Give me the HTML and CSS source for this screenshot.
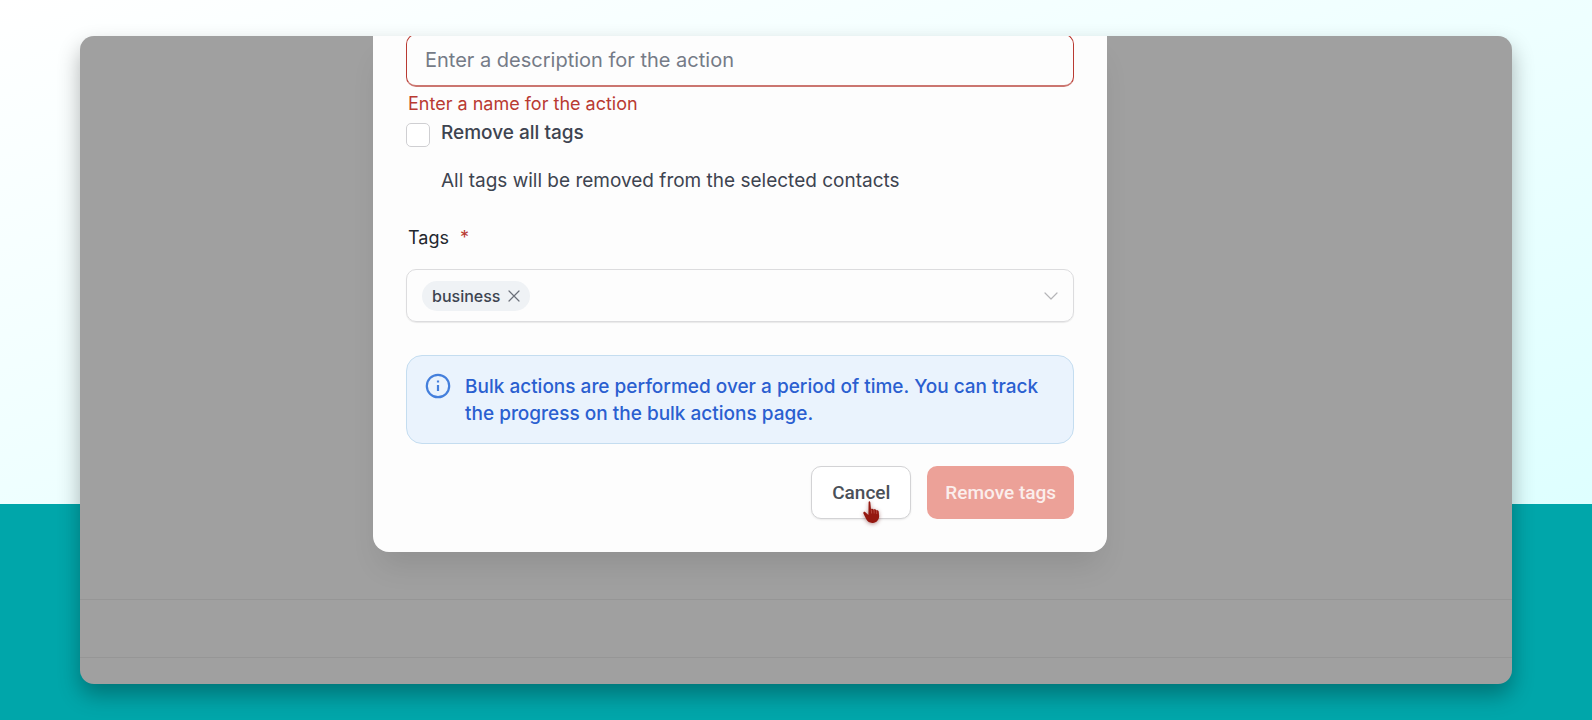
FILE: index.html
```html
<!DOCTYPE html>
<html lang="en">
<head>
    <meta charset="UTF-8">
    <meta name="viewport" content="width=device-width, initial-scale=1.0">
    <title>Remove tags</title>
    <link rel="stylesheet" href="styles.css">
</head>
<body>

<main class="screen">
    <!-- Remove tags dialog -->
    <form class="dialog">
        <input type="text" class="text-input" id="action-name" aria-label="Action description" aria-describedby="action-error" placeholder="Enter a description for the action">
        <p class="error" id="action-error">Enter a name for the action</p>

        <div class="check-row">
            <input type="checkbox" class="checkbox" id="remove-all">
            <div>
                <label class="check-label" for="remove-all">Remove all tags</label>
                <p class="check-help">All tags will be removed from the selected contacts</p>
            </div>
        </div>

        <label class="field-label" for="tags">Tags <span class="required">*</span></label>
        <div class="tag-select">
            <span class="chip">
                business
                <button type="button" class="chip-remove" aria-label="Remove business">
                    <svg width="12" height="12" viewBox="0 0 12 12" fill="none" stroke="currentColor" stroke-width="1.2" stroke-linecap="round"><path d="M1 1l10 10M11 1L1 11"/></svg>
                </button>
            </span>
            <select id="tags"><option value=""></option></select>
            <svg class="chevron" width="14" height="8" viewBox="0 0 14 8" fill="none" stroke="currentColor" stroke-width="1.2" stroke-linecap="round" stroke-linejoin="round"><path d="M1 1l6 6 6-6"/></svg>
        </div>

        <div class="notice">
            <svg class="notice-icon" width="26" height="26" viewBox="0 0 26 26" fill="none" stroke="currentColor" stroke-width="2.2"><circle cx="13" cy="13" r="11.2"/><path d="M13 12v6"/><path d="M13 7.500v2"/></svg>
            <p>Bulk actions are performed over a period of time. You can track the progress on the bulk actions page.</p>
        </div>

        <div class="actions">
            <button type="button" class="btn btn-cancel">
                Cancel
                <svg class="pointer" width="22" height="26" viewBox="0 0 22 26"><path d="M7.600 2.200c0-1.300 1.600-1.300 1.700 0l.7 7c.6-.7 2.200-.6 2.600.5.7-.6 2.200-.4 2.600.7 1-.5 2.300 0 2.500 1.200l.4 4.200c.2 3.600-2.300 6.900-6.300 7.100-3 .2-5.200-1.200-6.500-3.600L2.400 13.600c-.5-1.300.9-2.300 2-1.400l3 2.800z" fill="#951810"/><path d="M10.300 9.500l.3 4M13 10l.2 3.500M15.600 11l.1 3" stroke="#c9665c" stroke-width=".6"/></svg>
            </button>
            <button type="submit" class="btn btn-remove">Remove tags</button>
        </div>
    </form>

    <!-- List rows behind the dialog -->
    <div class="rows">
        <div class="row"></div>
        <div class="row row-last"></div>
    </div>
</main>

</body>
</html>
```
FILE: styles.css
```css
:root {
    --teal: #00a6aa;
    --overlay: #a0a0a0;
    --overlay-line: #969696;
    --danger: #b93a32;
    --blue: #2a5fd0;
    --text: #3d4450;
    --border: #dcdcde;
}

* {
    box-sizing: border-box;
}

body {
    margin: 0;
    min-height: 100vh;
    padding: 36px 80px;
    font-family: Inter, "Liberation Sans", sans-serif;
    font-size: 19px;
    color: var(--text);
    background: linear-gradient(to bottom right, #ffffff, #deffff) top / 100% 70% no-repeat var(--teal);
}

p {
    margin: 0;
}

.screen {
    overflow: hidden;
    border-radius: 14px;
    background-color: var(--overlay);
    box-shadow: 0 11px 22px rgba(0, 0, 0, 0.3);
}

/* Dialog */
.dialog {
    position: relative;
    z-index: 1;
    max-width: 734px;
    margin: -2px 0 0 293px;
    padding: 0 33px 33px;
    border-radius: 0 0 16px 16px;
    background-color: #fdfdfd;
    box-shadow: 0 20px 30px -8px rgba(0, 0, 0, 0.1);
}

.text-input {
    display: block;
    width: 100%;
    height: 53px;
    padding: 0 18px;
    border: 1px solid var(--danger);
    border-bottom: 2px solid #cb7670;
    border-radius: 10px;
    background: transparent;
    font: inherit;
    font-size: 20px;
    color: var(--text);
    outline: none;
}

.text-input::placeholder {
    color: #757b87;
    opacity: 1;
}

.error {
    padding: 4px 2px 0;
    font-size: 18px;
    line-height: 26px;
    color: var(--danger);
}

.check-row {
    display: flex;
    gap: 11px;
    padding-top: 3px;
}

.checkbox {
    appearance: none;
    flex: none;
    width: 24px;
    height: 24px;
    margin: 3px 0 0;
    border: 1px solid #cfcfd2;
    border-radius: 5px;
    background-color: #fff;
}

.check-label {
    display: block;
    font-weight: 500;
    line-height: 26px;
}

.check-help {
    padding-top: 22px;
    line-height: 26px;
}

.field-label {
    display: block;
    padding: 31px 2px 18px;
    font-size: 18px;
    line-height: 26px;
    color: #23272e;
}

.required {
    margin-left: 6px;
    color: var(--danger);
}

.tag-select {
    display: flex;
    align-items: center;
    height: 53px;
    padding: 0 15px;
    border: 1px solid var(--border);
    border-radius: 10px;
    box-shadow: 0 1px 1px rgba(0, 0, 0, 0.08);
}

.chip {
    display: flex;
    align-items: center;
    gap: 8px;
    height: 30px;
    padding: 0 10px;
    border-radius: 15px;
    background-color: #eff2f5;
    font-size: 16px;
    font-weight: 500;
}

.chip-remove {
    display: flex;
    padding: 0;
    border: none;
    background: none;
    color: #6b7079;
    cursor: pointer;
}

.tag-select select {
    appearance: none;
    flex: 1;
    height: 100%;
    border: none;
    background: transparent;
    outline: none;
}

.chevron {
    color: #b5b5b8;
    pointer-events: none;
}

.notice {
    display: flex;
    gap: 14px;
    margin-top: 33px;
    padding: 17px 18px 16px;
    border: 1px solid #c4ddf0;
    border-radius: 16px;
    background-color: #eaf3fd;
    font-weight: 500;
    line-height: 27px;
    color: var(--blue);
}

.notice-icon {
    flex: none;
    color: #447fdc;
}

.actions {
    display: flex;
    justify-content: flex-end;
    gap: 16px;
    margin-top: 22px;
}

.btn {
    height: 53px;
    padding: 0 20px;
    border: 1px solid transparent;
    border-radius: 10px;
    font-family: Roboto, Inter, sans-serif;
    font-size: 19px;
    font-weight: 500;
    cursor: pointer;
}

.btn-cancel {
    position: relative;
    border-color: #d3d3d5;
    background-color: #fff;
    color: #4a5058;
    box-shadow: 0 1px 2px rgba(0, 0, 0, 0.08);
}

.btn-remove {
    padding: 0 17px;
    background-color: #eca198;
    color: #fbeeec;
}

/* Hand pointer over the cancel button */
.pointer {
    position: absolute;
    top: 33px;
    left: 49px;
    filter: drop-shadow(0 1px 2px rgba(90, 0, 0, 0.45));
}

/* Rows behind the dialog */
.rows {
    padding-top: 47px;
}

.row {
    height: 58px;
    border-top: 1px solid var(--overlay-line);
}

.row-last {
    height: 27px;
}
```
